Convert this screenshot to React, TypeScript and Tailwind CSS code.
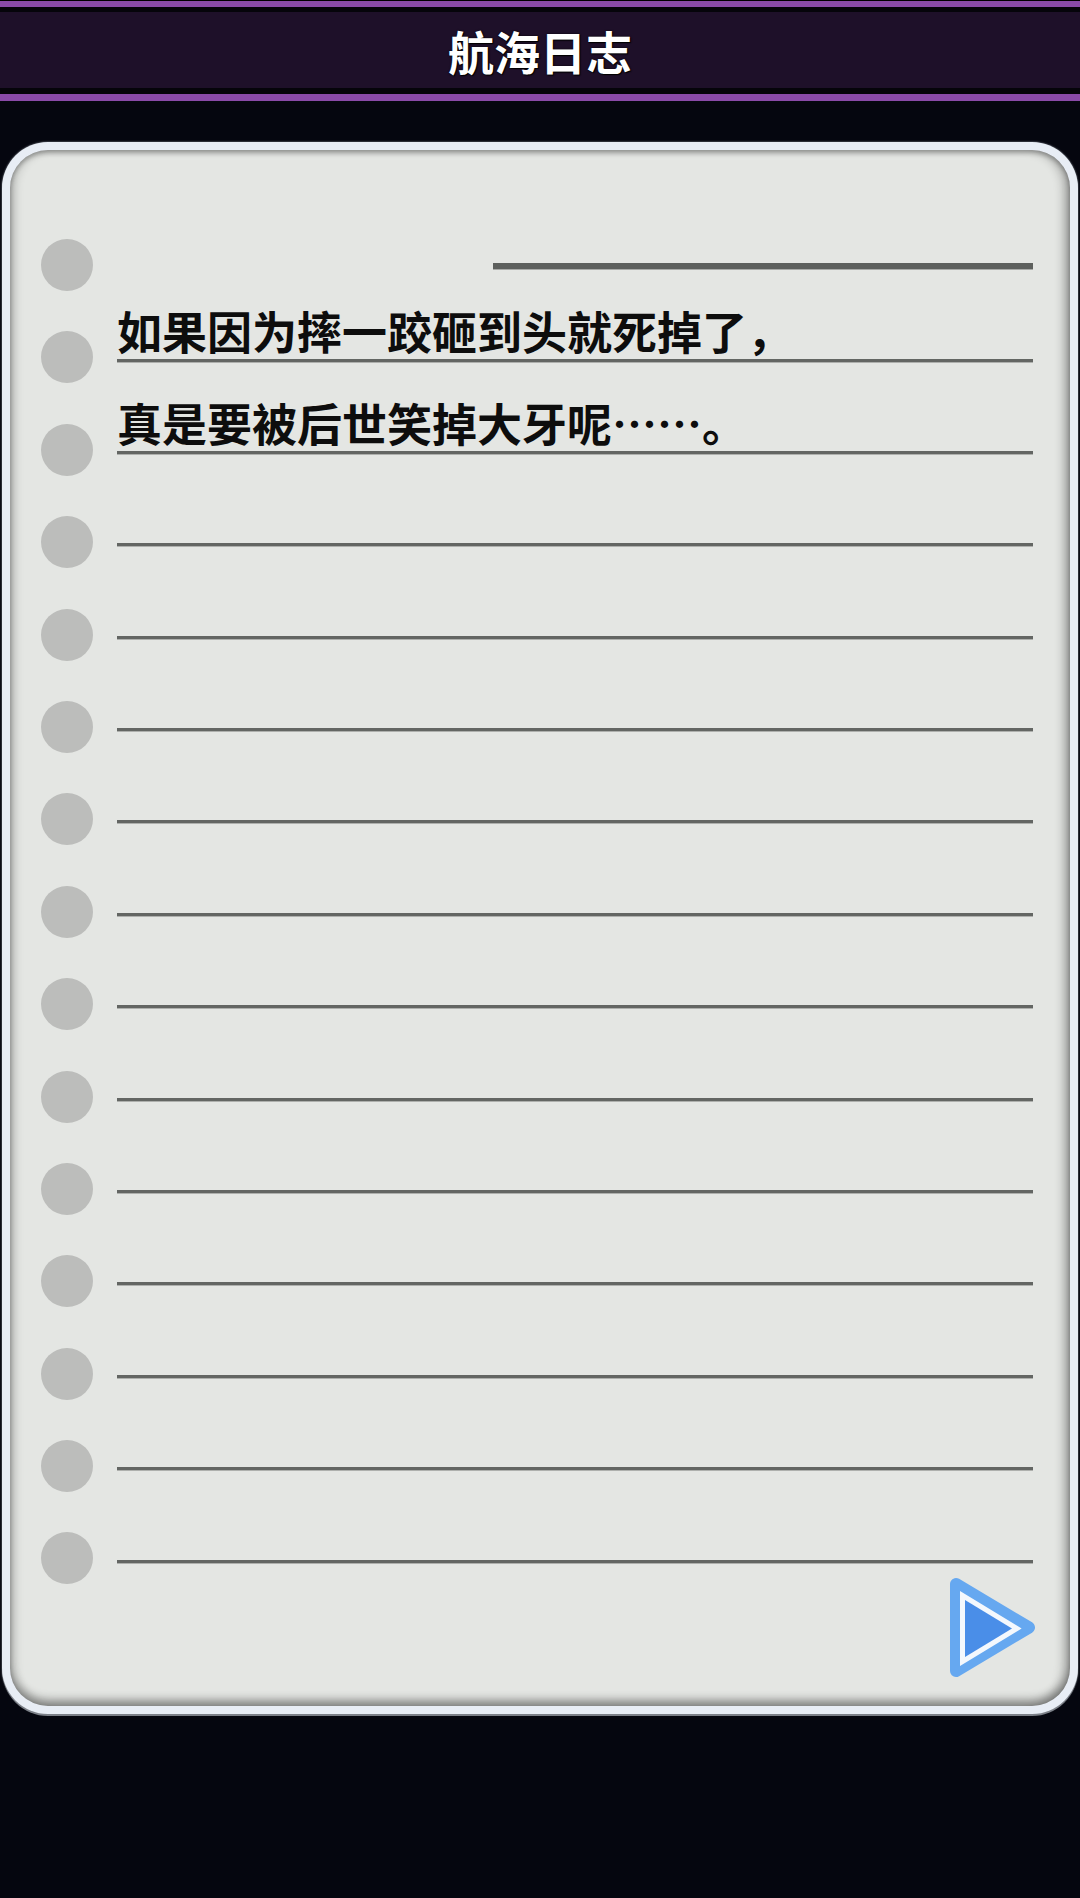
import React from 'react'

const lines = [
  '如果因为摔一跤砸到头就死掉了，',
  '真是要被后世笑掉大牙呢……。',
  '', '', '', '', '', '', '', '', '', '', '', '',
]

const cjk = { fontFamily: '"Noto Sans CJK SC", "Noto Sans", sans-serif' }

function PlayButton() {
  return (
    <svg width="95" height="109" viewBox="0 0 95 109" className="-mr-[7px]">
      <polygon points="11,11 11,98 84,54.5" fill="#66a8f0" stroke="#66a8f0" strokeWidth="12" strokeLinejoin="round" />
      <polygon points="20,27 20,84 67,55.5" fill="#f4f8fd" stroke="#f4f8fd" strokeWidth="10" strokeLinejoin="miter" />
      <polygon points="20,27 20,84 67,55.5" fill="#4a8ee8" />
    </svg>
  )
}

export default function App() {
  return (
    <div className="w-full min-h-[1898px] bg-[#05060f]" style={cjk} lang="zh-CN">
      {/* header */}
      <div className="bg-black pt-[1px]">
        <div className="h-[6px] bg-[#8a4aa8]"></div>
        <div className="h-[5px] bg-[#05040a]"></div>
        <div className="h-[76px] bg-[#1e1029] flex items-center justify-center">
          <h1 className="text-white font-bold text-[46px] leading-none [text-shadow:0_0_2px_#000,1px_1px_1px_#000]">航海日志</h1>
        </div>
        <div className="h-[6px] bg-[#05040a]"></div>
        <div className="h-[7px] bg-[#8a4aa8]"></div>
      </div>

      {/* notebook */}
      <div className="mx-[2px] mt-[41px] h-[1572px] rounded-[46px] bg-[#e8edf5] p-[8px] shadow-[0_2px_0_#7c8088,0_0_2px_#9aa0a8]">
        <div className="h-full rounded-[38px] bg-[#e4e6e3] shadow-[inset_0_-7px_8px_rgba(0,0,0,0.3),inset_0_3px_4px_rgba(0,0,0,0.22),inset_6px_0_8px_rgba(0,0,0,0.12),inset_-7px_0_10px_rgba(0,0,0,0.22)] flex pl-[31px] pr-[37px]">
          <div className="flex flex-col gap-[40.4px] pt-[89px]">
            {Array.from({ length: 15 }).map((_, i) => (
              <div key={i} className="w-[52px] h-[52px] rounded-full bg-[#bcbdbb]"></div>
            ))}
          </div>
          <div className="flex-1 ml-[24px] pt-[113px] flex flex-col">
            <div className="ml-[376px] h-[6px] bg-[#5d605d] shadow-[0_1px_0_#a8aaa7]"></div>
            {lines.map((t, i) => (
              <div
                key={i}
                className={
                  (i === 0 ? 'h-[92.5px]' : 'h-[92.4px]') +
                  ' border-b-[3px] border-[#636663] shadow-[0_1px_0_#aeb0ad] flex items-end pb-[6px]'
                }
              >
                <span className="text-[45px] leading-none font-bold text-[#0d0d0d] whitespace-nowrap">{t}</span>
              </div>
            ))}
            <div className="flex justify-end mt-[10px]">
              <PlayButton />
            </div>
          </div>
        </div>
      </div>
    </div>
  )
}
